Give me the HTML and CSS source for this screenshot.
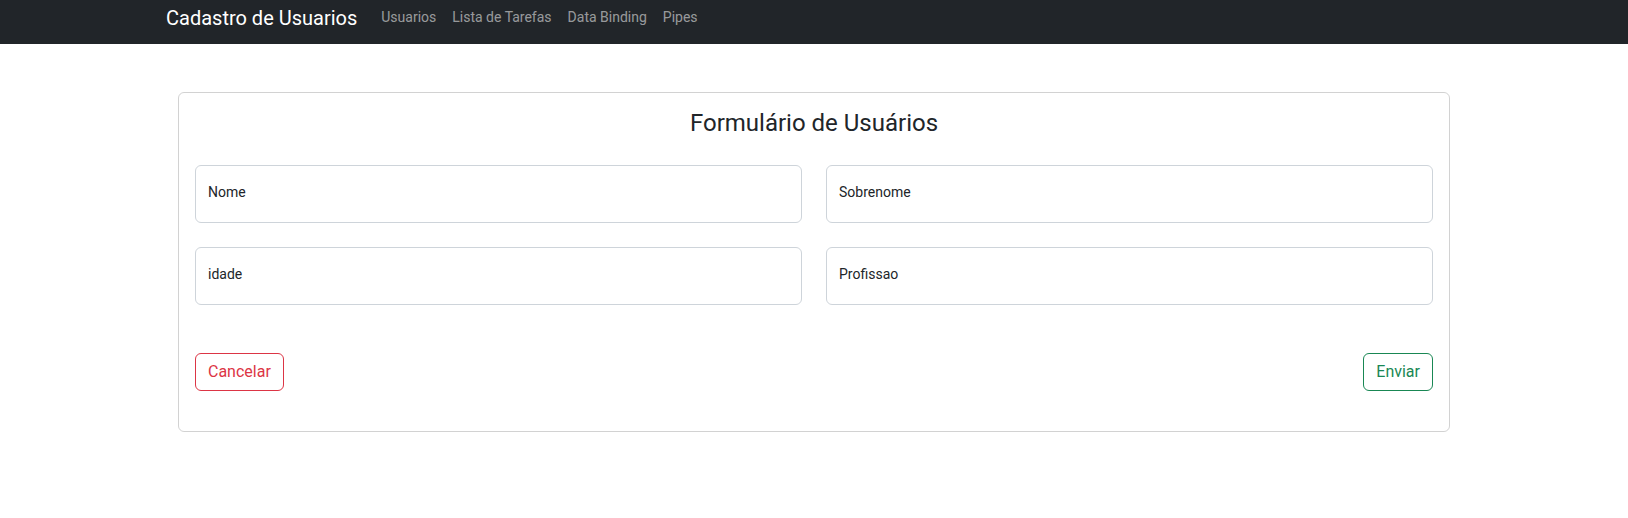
FILE: index.html
```html
<!DOCTYPE html>
<html lang="pt-BR">
<head>
<meta charset="utf-8">
<title>Cadastro de Usuarios</title>
<link rel="stylesheet" href="styles.css">
</head>
<body>
<nav class="navbar">
  <div class="container nav-inner">
    <a class="brand" href="#">Cadastro de Usuarios</a>
    <ul class="nav-links">
      <li><a class="nav-link" href="#">Usuarios</a></li>
      <li><a class="nav-link" href="#">Lista de Tarefas</a></li>
      <li><a class="nav-link" href="#">Data Binding</a></li>
      <li><a class="nav-link" href="#">Pipes</a></li>
    </ul>
  </div>
</nav>
<main class="container main">
  <div class="card">
    <h4 class="card-title">Formulário de Usuários</h4>
    <form class="form">
      <div class="grid">
        <div class="field"><span class="field-label">Nome</span></div>
        <div class="field"><span class="field-label">Sobrenome</span></div>
        <div class="field"><span class="field-label">idade</span></div>
        <div class="field"><span class="field-label">Profissao</span></div>
      </div>
      <div class="actions">
        <button type="button" class="btn btn-danger">Cancelar</button>
        <button type="button" class="btn btn-success">Enviar</button>
      </div>
    </form>
  </div>
</main>
</body>
</html>
```
FILE: styles.css
```css
* { box-sizing: border-box; }
html, body { margin: 0; padding: 0; }
body {
  font-family: Roboto, "Liberation Sans", Arial, sans-serif;
  color: #212529;
  background: #fff;
  font-size: 16px;
}
.container {
  max-width: 1320px;
  margin: 0 auto;
  padding: 0 12px;
}
.navbar {
  background: #212529;
  height: 44px;
}
.nav-inner {
  display: flex;
  align-items: flex-start;
}
.brand {
  color: #fff;
  text-decoration: none;
  font-size: 20px;
  line-height: 30px;
  margin-top: 3px;
  margin-right: 16px;
}
.nav-links {
  list-style: none;
  margin: 0;
  padding: 0;
  display: flex;
}
.nav-link {
  display: block;
  color: rgba(255, 255, 255, 0.55);
  text-decoration: none;
  font-size: 14px;
  line-height: 21px;
  padding: 7px 8px 0;
}
.main {
  padding-top: 48px;
}
.card {
  margin: 0 12px;
  border: 1px solid rgba(0, 0, 0, 0.175);
  border-radius: 6px;
  padding: 16px 16px 16px;
}
.card-title {
  margin: 0;
  text-align: center;
  font-weight: 400;
  font-size: 24px;
  line-height: 29px;
}
.grid {
  display: grid;
  grid-template-columns: 1fr 1fr;
  column-gap: 24px;
  row-gap: 24px;
  margin-top: 27px;
}
.field {
  height: 58px;
  border: 1px solid #ced4da;
  border-radius: 6px;
  padding: 16px 12px;
}
.field-label {
  display: block;
  font-size: 14px;
  line-height: 21px;
}
.actions {
  display: flex;
  justify-content: space-between;
  margin-top: 48px;
  margin-bottom: 24px;
}
.btn {
  font-family: inherit;
  font-size: 16px;
  line-height: 24px;
  padding: 6px 12px;
  background: transparent;
  border: 1px solid;
  border-radius: 6px;
  cursor: pointer;
}
.btn-danger { color: #dc3545; border-color: #dc3545; }
.btn-success { color: #198754; border-color: #198754; }
```
